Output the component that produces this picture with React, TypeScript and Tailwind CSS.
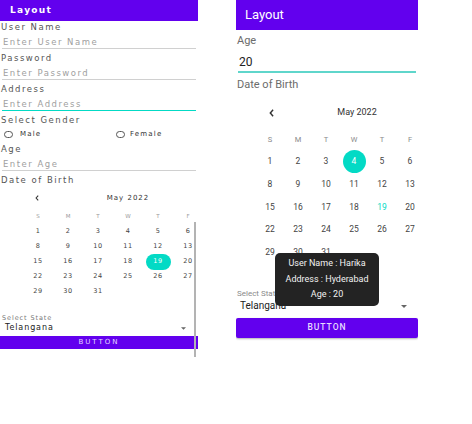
import React from 'react';

// Saturday column is scrolled out of view in both screenshots, so only Sun–Fri are drawn
const weeks = [
  [1, 2, 3, 4, 5, 6],
  [8, 9, 10, 11, 12, 13],
  [15, 16, 17, 18, 19, 20],
  [22, 23, 24, 25, 26, 27],
  [29, 30, 31],
];
const dow = ['S', 'M', 'T', 'W', 'T', 'F'];

function Caret({ className }: { className: string }) {
  return (
    <svg className={className} viewBox="0 0 10 5">
      <path d="M0 0h10L5 5z" fill="currentColor" />
    </svg>
  );
}

function Chevron({ className }: { className: string }) {
  return (
    <svg className={className} viewBox="0 0 6 10" fill="none">
      <path d="M5 1L1.5 5 5 9" stroke="currentColor" strokeWidth="1.8" />
    </svg>
  );
}

function LeftField({ label, placeholder, active }: { label: string; placeholder: string; active?: boolean }) {
  return (
    <div className="mb-[3px]">
      <div className="pl-[1px] text-[8.5px] leading-[12px] tracking-[1.5px] text-[#555]">{label}</div>
      <div
        className={
          'mx-[2px] pl-[1px] pt-[3px] text-[8.5px] leading-[12px] tracking-[1.5px] text-[#a0a0a0] border-b ' +
          (active ? 'border-[#03dac5]' : 'border-[#d0d0d0]')
        }
      >
        {placeholder}
      </div>
    </div>
  );
}

function LeftPanel() {
  return (
    <div className="relative w-[198px] h-[424px] overflow-hidden font-['DejaVu_Sans',sans-serif]">
      <div className="h-[21px] bg-[#6200ee] pl-[10px] text-[9px] font-bold leading-[21px] tracking-[1.3px] text-white">
        Layout
      </div>
      <LeftField label="User Name" placeholder="Enter User Name" />
      <LeftField label="Password" placeholder="Enter Password" />
      <LeftField label="Address" placeholder="Enter Address" active />
      <div className="pl-[1px] text-[8.5px] leading-[12px] tracking-[1.5px] text-[#555]">Select Gender</div>
      <div className="mt-[1px] mb-[2px] flex h-[14px] items-center text-[7px] tracking-[1.2px] text-[#333]">
        <div className="flex w-[112px] items-center pl-[4px]">
          <span className="h-[7px] w-[9px] rounded-full border border-[#555]" />
          <span className="ml-[7px]">Male</span>
        </div>
        <div className="flex items-center pl-[4px]">
          <span className="h-[7px] w-[9px] rounded-full border border-[#555]" />
          <span className="ml-[5px]">Female</span>
        </div>
      </div>
      <LeftField label="Age" placeholder="Enter Age" />
      <div className="pl-[1px] text-[8.5px] leading-[12px] tracking-[1.5px] text-[#555]">Date of Birth</div>

      <div className="ml-[23px] mt-[5px] w-[210px]">
        <div className="relative flex h-[14px] items-center justify-center text-[7px] tracking-[1px] text-[#333]">
          <Chevron className="absolute left-[12px] top-[4px] h-[6px] w-[4px] text-[#333]" />
          May 2022
        </div>
        <div className="mt-[4px] grid h-[15px] w-[180px] grid-cols-6 items-center text-center text-[5.5px] text-[#999]">
          {dow.map((d, i) => (
            <div key={i}>{d}</div>
          ))}
        </div>
        {weeks.map((w, wi) => (
          <div key={wi} className="grid h-[15px] w-[180px] grid-cols-6 items-center text-center text-[6.5px] tracking-[0.5px] text-[#444]">
            {w.map((n) => (
              <div key={n} className="flex justify-center">
                {n === 19 ? (
                  <span className="flex h-[16px] w-[25px] items-center justify-center rounded-full bg-[#03dac5] text-white">
                    {n}
                  </span>
                ) : (
                  n
                )}
              </div>
            ))}
          </div>
        ))}
      </div>

      <div className="mt-[15px] pl-[2px] text-[6.5px] leading-[9px] tracking-[0.9px] text-[#777]">Select State</div>
      <div className="relative h-[10px] pl-[5px] text-[8px] leading-[10px] tracking-[0.9px] text-[#222]">
        Telangana
        <Caret className="absolute left-[181px] top-[4px] h-[3px] w-[5px] text-[#666]" />
      </div>
      <div className="mt-[3px] flex h-[13px] items-center justify-center bg-[#6200ee] text-[7px] tracking-[2px] text-[#e2d4ff]">
        BUTTON
      </div>

      <div className="absolute left-[194px] top-[222px] h-[135px] w-[2px] bg-[#b3b3b3]" />
    </div>
  );
}

function RightPanel() {
  return (
    <div className="relative ml-[38px] h-[424px] w-[182px] overflow-hidden font-['Roboto',sans-serif]">
      <div className="h-[30px] bg-[#6200ee] pl-[9px] text-[13px] leading-[30px] text-white">Layout</div>
      <div className="mt-[4px] pl-[1px] text-[11px] leading-[14px] text-[#6b6b6b]">Age</div>
      <div className="mx-[2px] mt-[6px] pl-[1px] text-[12px] leading-[16px] text-[#222]">20</div>
      <div className="mx-[2px] mt-[1px] h-[2px] bg-[#5fd6cb]" />
      <div className="mt-[5px] pl-[1px] text-[11px] leading-[14px] text-[#6b6b6b]">Date of Birth</div>

      <div className="ml-[20px] mt-[13px] w-[162px]">
        <div className="relative flex h-[16px] w-[196px] items-center justify-center pl-[6px] text-[9px] text-[#333]">
          <Chevron className="absolute left-[13px] top-[4px] h-[8px] w-[5px] text-[#333]" />
          May 2022
        </div>
        <div className="mt-[9px] grid h-[20px] w-[168px] grid-cols-6 items-center text-center text-[7.5px] text-[#8a8a8a]">
          {dow.map((d, i) => (
            <div key={i}>{d}</div>
          ))}
        </div>
        {weeks.map((w, wi) => (
          <div key={wi} className="grid h-[22.75px] w-[168px] grid-cols-6 items-center text-center text-[8.5px] text-[#444]">
            {w.map((n) => (
              <div key={n} className="flex justify-center">
                {n === 4 ? (
                  <span className="flex h-[23px] w-[23px] items-center justify-center rounded-full bg-[#03dac5] text-white">
                    {n}
                  </span>
                ) : n === 19 ? (
                  <span className="text-[#03dac5]">{n}</span>
                ) : (
                  n
                )}
              </div>
            ))}
          </div>
        ))}
      </div>

      <div className="mt-[25px] pl-[1px] text-[8px] leading-[10px] text-[#8a8a8a]">Select State</div>
      <div className="relative h-[14px] pl-[4px] text-[10px] leading-[14px] text-[#222]">
        Telangana
        <Caret className="absolute left-[165px] top-[6px] h-[3px] w-[6px] text-[#666]" />
      </div>
      <div className="mt-[5px] flex h-[20px] items-center justify-center rounded-[2px] bg-[#6200ee] text-[8.5px] font-medium tracking-[1px] text-[#e6dbff] shadow-[0_1px_2px_rgba(0,0,0,0.3)]">
        BUTTON
      </div>

      <div className="absolute left-[39px] top-[253px] flex h-[53px] w-[104px] flex-col items-center justify-center rounded-[5px] bg-[#232323] text-[9px] leading-[15.5px] text-[#f2f2f2]">
        <div>User Name : Harika</div>
        <div>Address : Hyderabad</div>
        <div>Age : 20</div>
      </div>
    </div>
  );
}

export default function App() {
  return (
    <div className="flex h-[424px] w-[472px] items-start overflow-hidden bg-white">
      <LeftPanel />
      <RightPanel />
    </div>
  );
}
